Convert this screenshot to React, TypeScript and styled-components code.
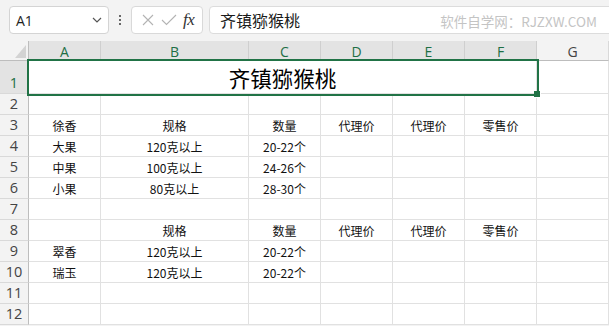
import React from "react";
import styled, { createGlobalStyle } from "styled-components";

const GlobalStyle = createGlobalStyle`
  html, body { margin: 0; padding: 0; background: #ffffff; }
  body { font-family: "Noto Sans", "Noto Sans CJK SC", sans-serif; overflow: hidden; }
`;

const Page = styled.div`
  width: 609px;
  height: 326px;
  overflow: hidden;
  background: #f3f3f3;
`;

const Toolbar = styled.div`
  height: 41px;
  box-sizing: border-box;
  padding: 6px 0 7px 9px;
  display: flex;
  align-items: stretch;
  overflow: hidden;
  background: #f3f3f3;
`;

const NameBox = styled.div`
  width: 100px;
  box-sizing: border-box;
  background: #fff;
  border: 1px solid #d4d4d4;
  border-radius: 4px;
  display: flex;
  align-items: center;
  justify-content: space-between;
  padding: 0 6px 0 6px;
  font-family: "Open Sans", "Noto Sans", sans-serif;
  font-size: 14px;
  color: #1f1f1f;
`;

const Dots = styled.div`
  width: 22px;
  display: flex;
  flex-direction: column;
  align-items: center;
  justify-content: center;
  gap: 2px;
  span {
    width: 2px;
    height: 2px;
    background: #3a3a3a;
    border-radius: 1px;
  }
`;

const FxBox = styled.div`
  width: 72px;
  box-sizing: border-box;
  background: #fff;
  border: 1px solid #d9d9d9;
  border-radius: 4px;
  display: flex;
  align-items: center;
  padding: 0 4px 0 5px;
  gap: 0;
`;

const IconSlot = styled.div`
  width: 21px;
  height: 20px;
  display: flex;
  align-items: center;
  justify-content: center;
`;

const FxText = styled.span`
  font-family: "Liberation Serif", "DejaVu Serif", serif;
  font-style: italic;
  font-size: 17px;
  color: #333;
  margin-left: 4px;
  letter-spacing: -0.5px;
`;

const FormulaInput = styled.div`
  flex: 1;
  margin-left: 6px;
  margin-right: -8px;
  box-sizing: border-box;
  background: #fff;
  border: 1px solid #dcdcdc;
  border-radius: 4px;
  display: flex;
  align-items: center;
  justify-content: space-between;
  padding: 0 19px 0 10px;
`;

const FormulaText = styled.span`
  font-family: "Noto Sans CJK SC", sans-serif;
  font-size: 16px;
  color: #1a1a1a;
`;

const Watermark = styled.span`
  font-family: "Noto Sans CJK SC", sans-serif;
  font-size: 13.5px;
  color: #c4c4c4;
  margin-top: 2px;
`;

const Grid = styled.div`
  display: grid;
  grid-template-columns: 29px 72px 148px 72px 72px 72px 72px 72px;
  grid-template-rows: 20px 33px repeat(11, 21px);
  background: #ffffff;
`;

const Corner = styled.div`
  background: #f3f3f3;
  border-right: 1px solid #bdbdbd;
  border-bottom: 1px solid #bdbdbd;
  position: relative;
  svg { position: absolute; right: 2px; bottom: 2px; }
`;

const ColHead = styled.div<{ $sel?: boolean }>`
  background: ${(p) => (p.$sel ? "#e3e3e3" : "#f3f3f3")};
  border-right: 1px solid ${(p) => (p.$sel ? "#cfcfcf" : "#d9d9d9")};
  border-bottom: 1px solid ${(p) => (p.$sel ? "#217346" : "#bdbdbd")};
  display: flex;
  align-items: center;
  justify-content: center;
  font-family: "Open Sans", "Noto Sans", sans-serif;
  font-size: 14px;
  color: ${(p) => (p.$sel ? "#1e6f45" : "#444")};
  padding-top: 1px;
  box-sizing: border-box;
`;

const RowHead = styled.div<{ $sel?: boolean }>`
  background: ${(p) => (p.$sel ? "#e3e3e3" : "#f3f3f3")};
  border-right: 1px solid ${(p) => (p.$sel ? "#217346" : "#bdbdbd")};
  border-bottom: 1px solid #d9d9d9;
  display: flex;
  align-items: flex-end;
  justify-content: center;
  font-family: "Open Sans", "Noto Sans", sans-serif;
  font-size: 14.5px;
  line-height: 18px;
  color: ${(p) => (p.$sel ? "#1e6f45" : "#444")};
  padding-bottom: 1px;
  box-sizing: border-box;
`;

const Cell = styled.div`
  border-right: 1px solid #e1e1e1;
  border-bottom: 1px solid #e1e1e1;
  display: flex;
  align-items: center;
  justify-content: center;
  font-family: "Noto Sans CJK SC", sans-serif;
  font-size: 12px;
  color: #111;
  white-space: nowrap;
  padding-top: 1px;
  box-sizing: border-box;
`;

const TitleCell = styled(Cell)`
  grid-column: span 6;
  position: relative;
  font-size: 21.5px;
  color: #000;
  outline: 2px solid #217346;
  outline-offset: 0px;
  z-index: 1;
  padding-top: 0;
`;

const FillHandle = styled.div`
  position: absolute;
  right: -5px;
  bottom: -5px;
  width: 6px;
  height: 6px;
  background: #217346;
  border: 1px solid #fff;
  border-left: none;
  border-top: none;
`;

const cols = ["A", "B", "C", "D", "E", "F", "G"];

const rows: string[][] = [
  [],
  ["", "", "", "", "", "", ""],
  ["徐香", "规格", "数量", "代理价", "代理价", "零售价", ""],
  ["大果", "120克以上", "20-22个", "", "", "", ""],
  ["中果", "100克以上", "24-26个", "", "", "", ""],
  ["小果", "80克以上", "28-30个", "", "", "", ""],
  ["", "", "", "", "", "", ""],
  ["", "规格", "数量", "代理价", "代理价", "零售价", ""],
  ["翠香", "120克以上", "20-22个", "", "", "", ""],
  ["瑞玉", "120克以上", "20-22个", "", "", "", ""],
  ["", "", "", "", "", "", ""],
  ["", "", "", "", "", "", ""],
];

export default function App() {
  return (
    <Page>
      <GlobalStyle />
      <Toolbar>
        <NameBox>
          <span>A1</span>
          <svg width="10" height="6" viewBox="0 0 10 6">
            <path d="M1 1 L5 5 L9 1" fill="none" stroke="#555" strokeWidth="1.2" />
          </svg>
        </NameBox>
        <Dots>
          <span />
          <span />
          <span />
        </Dots>
        <FxBox>
          <IconSlot>
            <svg width="12" height="12" viewBox="0 0 12 12">
              <path d="M1 1 L11 11 M11 1 L1 11" stroke="#b3b3b3" strokeWidth="1.1" fill="none" />
            </svg>
          </IconSlot>
          <IconSlot>
            <svg width="16" height="12" viewBox="0 0 16 12">
              <path d="M1 6 L5.5 10.5 L15 1" stroke="#b3b3b3" strokeWidth="1.1" fill="none" />
            </svg>
          </IconSlot>
          <FxText>fx</FxText>
        </FxBox>
        <FormulaInput>
          <FormulaText>齐镇猕猴桃</FormulaText>
          <Watermark>软件自学网：RJZXW.COM</Watermark>
        </FormulaInput>
      </Toolbar>
      <Grid>
        <Corner>
          <svg width="11" height="13" viewBox="0 0 11 13">
            <path d="M11 0 L11 13 L0 13 Z" fill="#d3d3d3" />
          </svg>
        </Corner>
        {cols.map((c) => (
          <ColHead key={c} $sel={c !== "G"}>
            {c}
          </ColHead>
        ))}
        <RowHead $sel>1</RowHead>
        <TitleCell>
          齐镇猕猴桃
          <FillHandle />
        </TitleCell>
        <Cell />
        {rows.slice(1).map((r, i) => (
          <React.Fragment key={i}>
            <RowHead>{i + 2}</RowHead>
            {r.map((v, j) => (
              <Cell key={j}>{v}</Cell>
            ))}
          </React.Fragment>
        ))}
      </Grid>
    </Page>
  );
}
